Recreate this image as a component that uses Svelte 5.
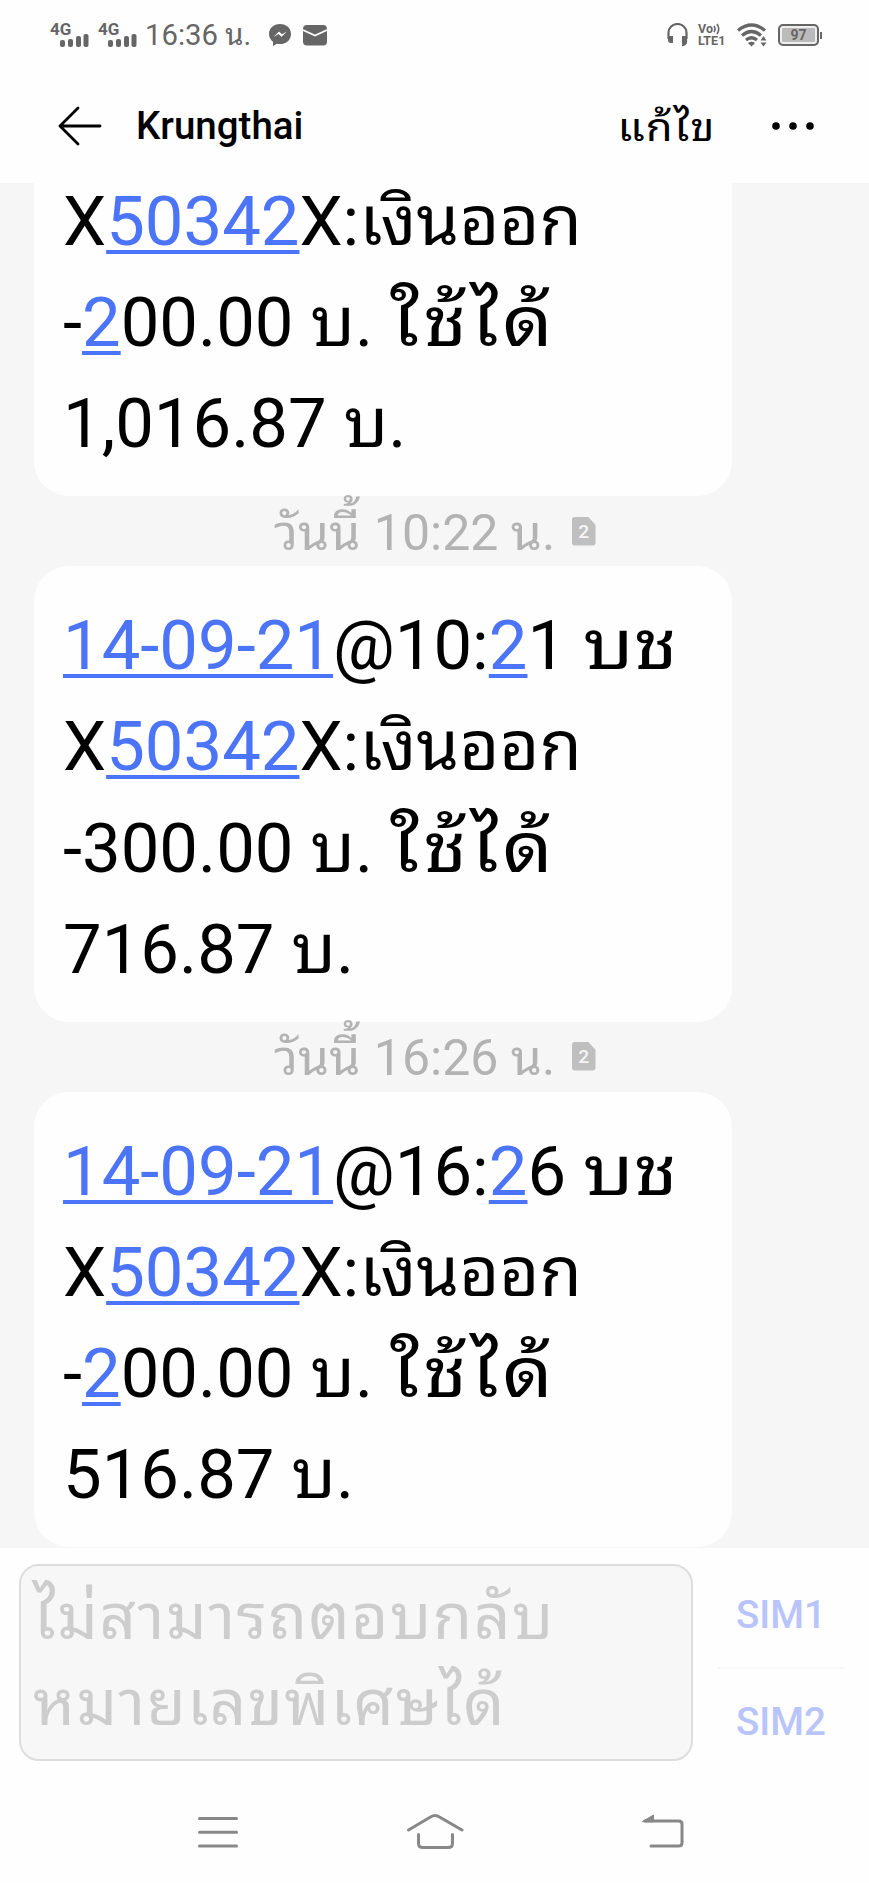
<script>
  // text runs: t = type ('link' tappable number, others Thai widths), s = string
  const account = [
    { s: 'X' },
    { t: 'link', s: '50342' },
    { s: 'X:เงินออก' }
  ];
  const baht = (amount) => [{ s: amount + ' บ.' }];
  const usable = [{ s: ' ' }, { t: 'wide', s: 'ใช้ได้' }];
  const date = (hour, rest) => [
    { t: 'link', s: '14-09-21' },
    { s: '@' + hour + ':' },
    { t: 'link', s: '2' },
    { s: rest + ' ' },
    { t: 'short', s: 'บช' }
  ];
  const twoHundred = [{ s: '-' }, { t: 'link', s: '2' }, ...baht('00.00'), ...usable];

  const messages = [
    { lines: [account, twoHundred, baht('1,016.87')] },
    { time: '10:22', lines: [date('10', '1'), account, [...baht('-300.00'), ...usable], baht('716.87')] },
    { time: '16:26', lines: [date('16', '6'), account, twoHundred, baht('516.87')] }
  ];

  const sims = ['SIM1', 'SIM2'];
</script>

<div class="screen">
  <div class="status">
    <div class="status-left">
      {#each [1, 2] as slot (slot)}
        <div class="signal">
          <span>4G</span>
          <svg width="30" height="14" viewBox="0 0 30 14" fill="#666">
            <rect x="0" y="7" width="5" height="7" rx="2" />
            <rect x="8" y="6" width="5" height="8" rx="2" />
            <rect x="16" y="3" width="5" height="11" rx="2" />
            <rect x="23.500" y="1" width="5" height="13" rx="2" />
          </svg>
        </div>
      {/each}
      <span class="clock">16:36 น.</span>
      <svg class="messenger" width="24" height="24" viewBox="0 0 24 24">
        <path d="M12 1C5.500 1 1 5.400 1 11c0 3.200 1.500 5.800 4 7.700V23l4-2.200c1 .2 2 .3 3 .3 6.500 0 11-4.400 11-10.100S18.500 1 12 1z" fill="#666" />
        <path d="M5.500 14l5.500-5.500 3 2.800 5-2.800-5.500 5.300-3-2.700z" fill="#fff" />
      </svg>
      <svg class="mail" width="24" height="22" viewBox="0 0 24 22">
        <rect y="1" width="24" height="20.500" rx="4" fill="#666" />
        <path d="M0 6l12 5.500L24 6" fill="none" stroke="#fff" stroke-width="1.800" />
      </svg>
    </div>
    <div class="status-right">
      <svg width="21" height="24" viewBox="0 0 21 24">
        <path d="M1.500 16V9.500a9 8.500 0 0 1 18 0V16M19 16v2.500q0 3-4 4" fill="none" stroke="#666" stroke-width="2.200" />
        <path d="M1 13h5v7H4q-3 0-3-3zM15 13h5v6q0 2-2 2h-3z" fill="#666" />
      </svg>
      <div class="volte">
        <div class="vo">Vo<svg width="8" height="12" viewBox="0 0 8 12" fill="none" stroke="#666" stroke-width="1.600"><path d="M1 3q2 3 0 6M4 1q3.500 5 0 10" /></svg></div>
        <div>LTE1</div>
      </div>
      <svg class="wifi" width="31" height="24" viewBox="0 0 31 24">
        <g fill="none" stroke="#666" stroke-width="3.200">
          <path d="M1 7.500q13.500-11 27 0" />
          <path d="M5 12.500q9.500-8 19 0" />
          <path d="M9 17q5.500-4.500 11 0" />
        </g>
        <path d="M11 20q3.500-2.500 7 0l-3.500 3.500zM23.500 17.500h6L26.500 13zM23.500 19.500h6L26.500 23.500z" fill="#666" />
      </svg>
      <div class="battery"><span>97</span></div>
    </div>
  </div>

  <header>
    <svg class="back" width="44" height="40" viewBox="0 0 44 40" fill="none" stroke="#000" stroke-width="2.800" stroke-linecap="round" stroke-linejoin="round">
      <path d="M42 20H2M20 2L2 20l18 18" />
    </svg>
    <h1>Krungthai</h1>
    <span class="edit">แก้ไข</span>
    <svg class="more" width="44" height="10" viewBox="0 0 44 10">
      <circle cx="5" cy="5" r="3.800" />
      <circle cx="22" cy="5" r="3.800" />
      <circle cx="39" cy="5" r="3.800" />
    </svg>
  </header>

  <main>
    {#each messages as message}
      {#if message.time}
        <div class="time">
          <span class="day">วันนี้</span><span>&nbsp;{message.time}&nbsp;</span><span>น.</span>
          <svg width="24" height="29" viewBox="0 0 25 30">
            <path d="M3 0h14l7.500 8v18.500q0 3-3 3H3q-3 0-3-3V3q0-3 3-3z" fill="#bfbfbf" />
            <text x="12.200" y="22" text-anchor="middle">2</text>
          </svg>
        </div>
      {/if}
      <div class="bubble">
        {#each message.lines as line}
          <div class="line">{#each line as run}<span class={run.t}>{run.s}</span>{/each}</div>
        {/each}
      </div>
    {/each}
  </main>

  <footer>
    <div class="input">
      <div>ไม่สามารถตอบกลับ</div>
      <div class="second">หมายเลขพิเศษได้</div>
    </div>
    <div class="sims">
      {#each sims as sim}
        <div class="sim">{sim}</div>
      {/each}
    </div>
  </footer>

  <nav>
    <svg width="42" height="38" viewBox="0 0 42 38">
      <path d="M2.500 5.500h37M2.500 19.300h37M2.500 33h37" />
    </svg>
    <svg width="58" height="38" viewBox="0 0 58 38">
      <path d="M2.500 17L24.500 4q4.500-3 9 0L56 17M12.500 21.500v9q0 4 4.500 4h25q4.500 0 4.500-4v-9" />
    </svg>
    <svg width="44" height="38" viewBox="0 0 44 38">
      <path d="M4 8h33.500q3.500 0 3.500 3V30q0 3-3.500 3H10" />
      <path d="M1.500 8.500L12.500 2v6.500z" class="solid" />
    </svg>
  </nav>
</div>

<style>
  :global(body) {
    margin: 0;
    background: #fefefe;
  }
  .screen {
    width: 869px;
    height: 1883px;
    display: flex;
    flex-direction: column;
    overflow: hidden;
    background: #fefefe;
    color: #000;
    font-family: Roboto, 'Noto Sans Thai Looped', 'Noto Sans Thai', 'Noto Sans', sans-serif;
    white-space: nowrap;
  }
  svg {
    display: block;
    flex: none;
  }
  .status {
    height: 70px;
    flex: none;
    display: flex;
    justify-content: space-between;
    box-sizing: border-box;
    padding: 0 47px 0 50px;
    color: #666;
  }
  .status-left,
  .status-right {
    display: flex;
    align-items: center;
  }
  .signal {
    width: 48px;
    padding-bottom: 1px;
  }
  .signal span {
    display: block;
    height: 12px;
    font-size: 17px;
    font-weight: 700;
    line-height: 14px;
  }
  .signal svg {
    margin-left: 10px;
    margin-top: -1px;
  }
  .clock {
    width: 123px;
    margin-left: -1px;
    font-size: 29.300px;
    line-height: 40px;
  }
  .mail {
    margin-left: 11px;
  }
  .volte {
    width: 27px;
    margin-left: 10px;
    font-size: 12.500px;
    font-weight: 700;
    line-height: 12px;
  }
  .vo {
    display: flex;
  }
  .wifi {
    margin-left: 12px;
  }
  .battery {
    position: relative;
    width: 37px;
    height: 18px;
    margin: 0 3px 0 10px;
    border: 2px solid #666;
    border-radius: 5px;
    background: #bbb;
    box-shadow: inset 0 0 0 2px #eee;
    font-size: 14px;
    font-weight: 700;
    line-height: 19px;
    text-align: center;
  }
  .battery::after {
    content: '';
    position: absolute;
    right: -5px;
    top: 6px;
    width: 2px;
    height: 7px;
    background: #666;
  }
  header {
    height: 113px;
    flex: none;
    box-sizing: border-box;
    display: flex;
    align-items: center;
    padding: 0 54px 1px 58px;
  }
  h1 {
    margin: 0 auto 0 34px;
    font-size: 38.500px;
    font-weight: 500;
    line-height: 50px;
  }
  .edit {
    padding-top: 3px;
    font-size: 39px;
    letter-spacing: 1px;
    line-height: 54px;
    transform: scaleX(1.120);
    transform-origin: right;
  }
  .more {
    margin-left: 55px;
  }
  main {
    height: 1365px;
    flex: none;
    box-sizing: border-box;
    display: flex;
    flex-direction: column;
    justify-content: flex-end;
    overflow: hidden;
    padding: 0 137px 1px 34px;
    background: #f6f6f6;
  }
  .bubble {
    flex: none;
    padding: 29px 0 21.300px 29px;
    border-radius: 35px;
    background: #fefefe;
    font-size: 68.800px;
  }
  .line {
    height: 101.300px;
    line-height: 101.300px;
  }
  .link {
    color: #4b74f8;
    text-decoration: underline;
    text-decoration-thickness: 3.500px;
    text-underline-offset: 5px;
    text-decoration-skip-ink: none;
  }
  /* Thai words drawn a little wider than the font's own width */
  .short,
  .wide {
    display: inline-block;
    transform: scaleX(1.140);
    transform-origin: left;
  }
  .wide {
    letter-spacing: 3.500px;
  }
  .time {
    height: 70px;
    flex: none;
    display: flex;
    align-items: center;
    margin-left: 240px;
    color: #b3b3b3;
    font-size: 50px;
    line-height: 70px;
  }
  .time span {
    padding-top: 3px;
  }
  .day {
    margin-right: 1px;
  }
  .time svg {
    margin-left: 17px;
  }
  .time text {
    fill: #f6f6f6;
    font-size: 20px;
    font-weight: 500;
  }
  footer {
    height: 232px;
    flex: none;
    box-sizing: border-box;
    display: flex;
    padding: 16px 25px 19px 19px;
  }
  .input {
    width: 674px;
    height: 197px;
    box-sizing: border-box;
    padding: 9px 12px;
    border: 2px solid #ddd;
    border-radius: 20px;
    background: #f7f7f7;
    color: #cdcdcd;
    font-size: 64px;
    letter-spacing: 1.500px;
    line-height: 86px;
  }
  .second {
    letter-spacing: 1.200px;
  }
  .sims {
    width: 127px;
    margin-left: 24px;
  }
  .sim {
    height: 107px;
    padding-left: 19px;
    color: #b8c4fa;
    font-size: 38.600px;
    font-weight: 500;
    line-height: 102px;
  }
  .sim + .sim {
    margin-top: -4px;
    border-top: 2px solid #f7f7f7;
    line-height: 106px;
  }
  nav {
    display: flex;
    align-items: flex-start;
    justify-content: space-between;
    padding: 33px 184px 0 197px;
  }
  nav svg:nth-child(2) {
    margin-right: 10px;
  }
  nav path {
    fill: none;
    stroke: #888;
    stroke-width: 3;
    stroke-linecap: round;
  }
  nav .solid {
    fill: #888;
    stroke-width: 1;
  }
</style>
